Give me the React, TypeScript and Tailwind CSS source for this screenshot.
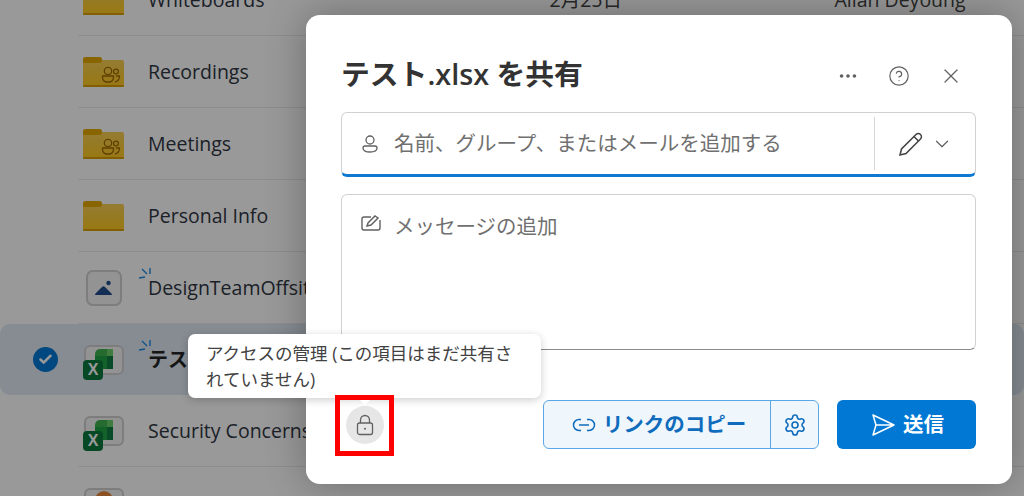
import React from 'react';
import { Check, ChevronDown, CircleHelp, MoreHorizontal, Settings, X } from 'lucide-react';

const latinJp = "font-['Open_Sans','Noto_Sans_CJK_JP',sans-serif]";

const Folder = ({ shared, id }: { shared?: boolean; id: string }) => (
  <svg width="41" height="30" viewBox="0 0 41 30">
    <defs>
      <linearGradient id={id} x1="0" y1="0" x2="0" y2="1">
        <stop offset="0" stopColor="#f5cf5a" />
        <stop offset="1" stopColor="#ffc91f" />
      </linearGradient>
    </defs>
    <path d="M0 3a3 3 0 0 1 3-3h13a3 3 0 0 1 3 3h20a2 2 0 0 1 2 2v23a2 2 0 0 1-2 2H2a2 2 0 0 1-2-2z" fill={`url(#${id})`} />
    <path d="M0 3a3 3 0 0 1 3-3h13q3 0 3 3t-3 3H0z" fill="#e5a800" />
    <rect x="0" y="28" width="41" height="2" rx="1" fill="#d99e00" />
    {shared && (
      <g fill="none" stroke="#a06a00" strokeWidth="1.300">
        <circle cx="25" cy="14" r="3.700" />
        <circle cx="33" cy="14.500" r="2.400" />
        <path d="M19.500 19h11v1.500a4.500 4.500 0 0 1-4.500 4.500h-2a4.500 4.500 0 0 1-4.500-4.500zM33 19h3.500q0 5-4.500 6" />
      </g>
    )}
  </svg>
);

const ImageFile = () => (
  <div className="ml-[3px] flex h-[36px] w-[36px] items-center justify-center rounded-[7px] border-2 border-[#d1d1d1] bg-[#f5f5f5]">
    <svg width="20" height="18" viewBox="0 0 20 18">
      <circle cx="14.500" cy="4" r="2.200" fill="#1f4e8c" />
      <path d="M1 16q0-1 1-2l6-6q1.500-1.500 3 0l6 6q1 1 1 2z" fill="#1f4e8c" />
    </svg>
  </div>
);

const ExcelFile = () => (
  <div className="relative h-[40px] w-[42px]">
    <div className="absolute right-[1px] top-[5px] h-[30px] w-[40px] rounded-[6px] border-2 border-[#d1d1d1] bg-[#f5f5f5]" />
    <svg width="18" height="20" viewBox="0 0 18 20" className="absolute left-[12px] top-[9px]">
      <path d="M7 0h5v7H0V5a5 5 0 0 1 5-5z" fill="#3fb24f" />
      <rect x="12" width="6" height="7" fill="#6bcf6b" />
      <rect y="7" width="12" height="13" fill="#21a347" />
      <rect x="12" y="7" width="6" height="13" fill="#107c41" />
    </svg>
    <div className="absolute left-0 top-[20px] flex h-[20px] w-[20px] items-center justify-center rounded-[4px] bg-[#0e7a3e] font-['Liberation_Sans',sans-serif] text-[16px] font-bold text-white">
      X
    </div>
  </div>
);

const PptFile = () => (
  <div className="ml-px flex h-[30px] w-[40px] justify-center rounded-[6px] border-2 border-[#d1d1d1] bg-[#f5f5f5] pt-[1px]">
    <div className="h-[18px] w-[18px] rounded-full bg-[#e8883a]" />
  </div>
);

const Sparkle = () => (
  <svg width="12" height="13" viewBox="0 0 12 13" className="absolute -left-[9px] -top-[5px]" stroke="#1a8ae5" strokeWidth="1.400" fill="none">
    <path d="M11 0v6M3 1l5 5M0 10l6-1" />
  </svg>
);

const rows = [
  { name: 'Whiteboards', icon: <Folder id="f1" />, date: '2月25日', author: 'Allan Deyoung' },
  { name: 'Recordings', icon: <Folder id="f2" shared /> },
  { name: 'Meetings', icon: <Folder id="f3" shared /> },
  { name: 'Personal Info', icon: <Folder id="f4" /> },
  { name: 'DesignTeamOffsite', icon: <ImageFile />, isNew: true },
  { name: 'テスト.xlsx', icon: <ExcelFile />, isNew: true, selected: true },
  { name: 'Security Concerns', icon: <ExcelFile /> },
  { name: '', icon: <PptFile /> },
];

const FileRow = ({ row }: { row: (typeof rows)[number] }) => (
  <div
    className={
      row.selected
        ? 'flex h-[71px] items-center rounded-[10px] bg-[#dfe9f3]'
        : 'ml-[78px] flex h-[72px] items-center border-b border-[#ebebeb]'
    }
  >
    {row.selected && (
      <div className="ml-[33px] mr-[20px] flex h-[25px] w-[25px] items-center justify-center rounded-full bg-[#0078d4]">
        <Check size={15} strokeWidth={4} className="text-white" />
      </div>
    )}
    <div className="w-[70px] pl-[5px]">{row.icon}</div>
    <div className={row.selected ? 'relative text-[20px] font-bold text-[#242424]' : 'relative text-[19.500px] text-[#303644]'}>
      {row.isNew && <Sparkle />}
      <span className="whitespace-nowrap">{row.name}</span>
    </div>
    {row.date && <div className="ml-[285px] w-[285px] text-[19.500px] text-[#424242]">{row.date}</div>}
    {row.author && <div className="whitespace-nowrap text-[19.500px] text-[#424242]">{row.author}</div>}
  </div>
);

const App: React.FC = () => {
  return (
    <div className={`relative h-[496px] w-[1024px] overflow-hidden bg-white ${latinJp}`}>
      {/* File list behind the dialog */}
      <div className="-mt-[36px]">
        {rows.map((row, index) => (
          <FileRow key={index} row={row} />
        ))}
      </div>

      {/* Dim layer */}
      <div className="absolute inset-0 bg-black/40" />

      {/* Share dialog */}
      <div className="absolute left-[306px] top-[15px] flex h-[469px] w-[706px] flex-col rounded-[14px] bg-white px-[35px] shadow-[0_0_40px_rgba(0,0,0,0.3)]">
        <div className="flex h-[97px] shrink-0 items-center justify-between pt-[22px]">
          <h1 className="text-[28.800px] font-semibold leading-none text-[#333333]">テスト.xlsx を共有</h1>
          <div className="mr-[14px] flex items-center gap-[29px] pt-[2px] text-[#616161]">
            <MoreHorizontal size={22} strokeWidth={2} />
            <CircleHelp size={22} strokeWidth={1.3} />
            <X size={24} strokeWidth={1.3} />
          </div>
        </div>

        {/* Recipient input */}
        <div className="flex h-[65px] w-[635px] shrink-0 items-center rounded-[6px] border border-[#d1d1d1] border-b-[3px] border-b-[#0f78d0]">
          <svg width="18" height="20" viewBox="0 0 18 20" fill="none" stroke="#616161" strokeWidth="1.300" className="ml-[19px]">
            <circle cx="9" cy="6" r="4" />
            <path d="M2 14a2 2 0 0 1 2-2h10a2 2 0 0 1 2 2c0 3-3 4-7 4s-7-1-7-4z" />
          </svg>
          <span className="ml-[15px] flex-1 text-[20.500px] text-[#707070]">名前、グループ、またはメールを追加する</span>
          <div className="flex h-[53px] w-[101px] items-center border-l border-[#d6d6d6] pl-[23px]">
            <svg width="26" height="26" viewBox="0 0 26 26" fill="none" stroke="#424242" strokeWidth="1.500">
              <path d="M2 24l1.500-6L18 3.500a3 3 0 0 1 4.500 4.500L8 22.500z" />
              <path d="M16 5.500l4.500 4.500" />
            </svg>
            <ChevronDown size={22} strokeWidth={1.3} className="ml-[7px] text-[#616161]" />
          </div>
        </div>

        {/* Message box */}
        <div className="mt-[17px] flex h-[156px] w-[635px] shrink-0 items-start rounded-[6px] border border-[#d1d1d1] border-b-[#8a8a8a] pl-[18px] pt-[17px]">
          <svg width="22" height="20" viewBox="0 0 22 20" fill="none" stroke="#616161" strokeWidth="1.400" className="mt-[2px]">
            <path d="M11 3H4a2 2 0 0 0-2 2v9a2 2 0 0 0 2 2h14a2 2 0 0 0 2-2V6" />
            <path d="M7 12l1-3 7-7 3 2-7 7z" />
          </svg>
          <span className="ml-[12px] text-[20.500px] leading-[28px] text-[#707070]">メッセージの追加</span>
        </div>

        {/* Footer */}
        <div className="mt-[50px] flex w-[635px] items-center">
          <div className="ml-[5px] flex h-[38px] w-[38px] items-center justify-center rounded-full bg-[#e6e6e6]">
            <svg width="18" height="22" viewBox="0 0 18 22" fill="none" stroke="#616161" strokeWidth="1.300">
              <path d="M4.500 9V6a4.500 4.500 0 0 1 9 0v3" />
              <rect x="1.500" y="9" width="15" height="11.500" rx="2" />
              <circle cx="9" cy="14.800" r="1" fill="#616161" stroke="none" />
            </svg>
          </div>
          <div className="ml-[159px] flex h-[49px] w-[276px] items-center rounded-[6px] border border-[#5aa6e6] bg-[#eff6fc] text-[#0f6cbd]">
            <div className="flex h-full w-[227px] items-center justify-center gap-[7px] border-r border-[#5aa6e6] pl-[4px]">
              <svg width="24" height="14" viewBox="0 0 24 14" fill="none" stroke="#0f6cbd" strokeWidth="1.500">
                <path d="M9 1.500H7a5.500 5.500 0 0 0 0 11h2M15 1.500h2a5.500 5.500 0 0 1 0 11h-2M7 7h10" />
              </svg>
              <span className="text-[20.500px] font-bold">リンクのコピー</span>
            </div>
            <div className="flex flex-1 items-center justify-center">
              <Settings size={24} strokeWidth={1.600} />
            </div>
          </div>
          <div className="ml-[18px] flex h-[49px] w-[139px] items-center justify-center gap-[7px] rounded-[6px] bg-[#0078d4] pl-[2px] text-white">
            <svg width="25" height="24" viewBox="0 0 25 24" fill="none" stroke="white" strokeWidth="1.500" strokeLinejoin="round">
              <path d="M2 2l21 10L2 22l3-10zM5 12h18" />
            </svg>
            <span className="text-[20.500px] font-bold">送信</span>
          </div>
        </div>
      </div>

      {/* Lock tooltip */}
      <div className="absolute left-[188px] top-[334px] w-[353px] rounded-[7px] bg-white py-[6px] pl-[18px] pr-[18px] text-[17.500px] leading-[26px] text-[#424242] shadow-[0_2px_8px_rgba(0,0,0,0.2)]">
        アクセスの管理 (この項目はまだ共有されていません)
        <div className="absolute left-[172px] top-[59px] h-[10px] w-[10px] rotate-45 bg-white" />
      </div>

      {/* Red highlight */}
      <div className="absolute left-[335px] top-[395px] h-[61px] w-[59px] border-[5px] border-[#ff0000]" />
    </div>
  );
};

export default App;
